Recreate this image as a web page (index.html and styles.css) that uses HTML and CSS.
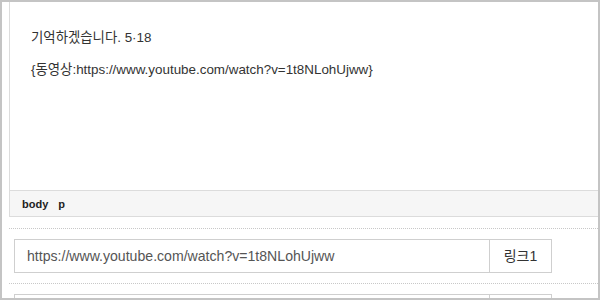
FILE: index.html
```html
<!DOCTYPE html>
<html lang="ko">
<head>
<meta charset="utf-8">
<link rel="stylesheet" href="styles.css">
</head>
<body>
<div class="frame">
  <div class="editor">
    <div class="content">
      <p>기억하겠습니다. 5·18</p>
      <p>{동영상:https://www.youtube.com/watch?v=1t8NLohUjww}</p>
    </div>
    <div class="status"><span>body</span><span>p</span></div>
  </div>
  <div class="row">
    <div class="field">
      <span class="url">https://www.youtube.com/watch?v=1t8NLohUjww</span>
      <span class="btn">링크1</span>
    </div>
  </div>
  <div class="row">
    <div class="field">
      <span class="url"></span>
      <span class="btn"></span>
    </div>
  </div>
</div>
</body>
</html>
```
FILE: styles.css
```css
html, body {
  margin: 0;
  padding: 0;
  background: #fff;
}
.frame {
  width: 600px;
  height: 300px;
  box-sizing: border-box;
  border: 2px solid #c4c4c4;
  overflow: hidden;
  padding-left: 7px;
  font-family: "Liberation Sans", Arial, "Noto Sans CJK KR", sans-serif;
}
.editor {
  border-left: 1px solid #dcdcdc;
  border-bottom: 1px solid #dcdcdc;
}
.content {
  height: 188px;
  box-sizing: border-box;
  padding: 26px 0 0 21px;
  color: #333;
  font-size: 13.4px;
  line-height: 20px;
}
.content p {
  margin: 0 0 12px;
}
.status {
  height: 25px;
  border-top: 1px solid #dcdcdc;
  background: #f6f6f6;
  display: flex;
  align-items: center;
  gap: 10px;
  padding-left: 12px;
  font-size: 11px;
  font-weight: bold;
  color: #222;
}
.row {
  border-top: 1px dotted #c8c8c8;
  margin-top: 11px;
  padding: 10px 0 0 5px;
}
.row + .row {
  margin-top: 10px;
}
.field {
  width: 538px;
  height: 34px;
  box-sizing: border-box;
  border: 1px solid #cfcfcf;
  display: flex;
}
.url {
  flex: 1;
  padding-left: 12px;
  font-size: 14.1px;
  line-height: 32px;
  color: #555;
}
.btn {
  width: 61px;
  border-left: 1px solid #cfcfcf;
  text-align: center;
  font-size: 14px;
  line-height: 32px;
  color: #333;
}
```
